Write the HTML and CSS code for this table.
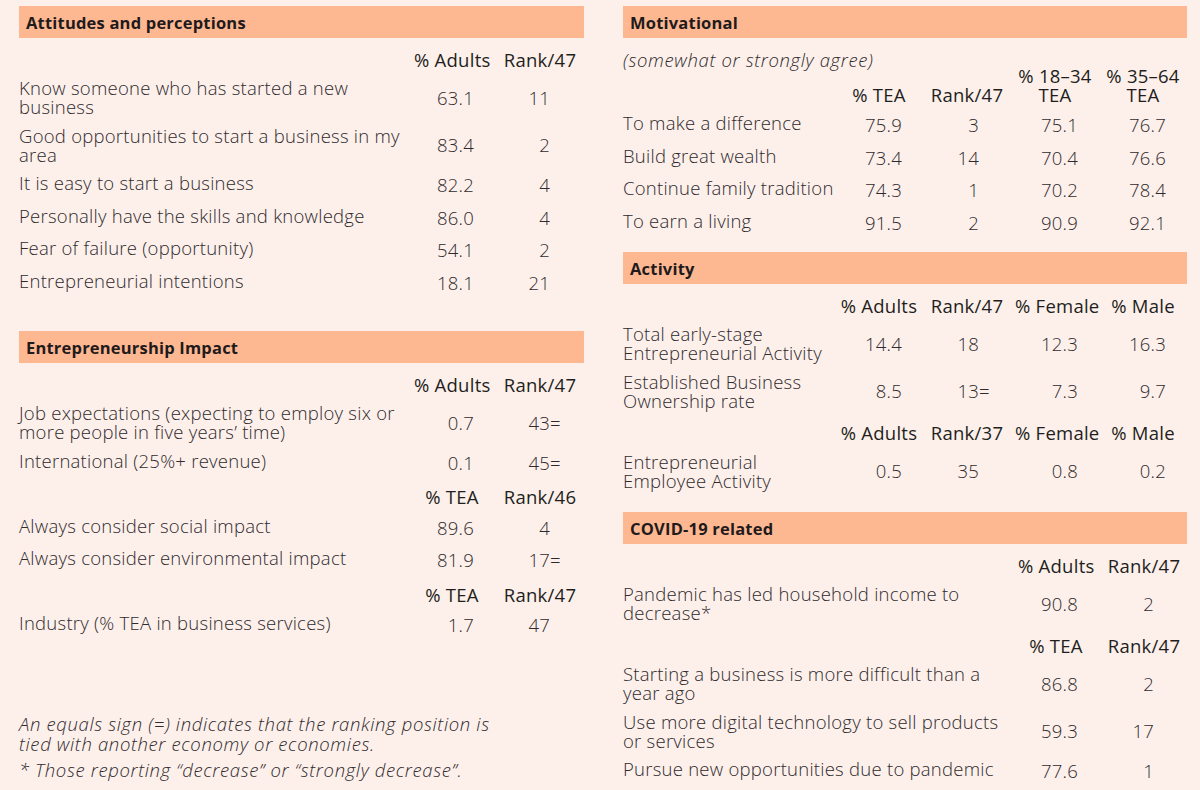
FILE: index.html
```html
<!DOCTYPE html>
<html lang="en">
<head>
<meta charset="utf-8">
<title>Entrepreneurship profile</title>
<link rel="stylesheet" href="styles.css">
</head>
<body>
<div class="page">
  <div class="col">
    <section class="sec">
      <h2 class="bar">Attitudes and perceptions</h2>
      <div class="tbl t2">
        <div></div><div class="hd">% Adults</div><div class="hd">Rank/47</div>
        <div class="lb">Know someone who has started a new business</div><div class="v a1">63.1</div><div class="v a2">11</div>
        <div class="lb">Good opportunities to start a business in my area</div><div class="v a1">83.4</div><div class="v a2">2</div>
        <div class="lb">It is easy to start a business</div><div class="v a1">82.2</div><div class="v a2">4</div>
        <div class="lb">Personally have the skills and knowledge</div><div class="v a1">86.0</div><div class="v a2">4</div>
        <div class="lb">Fear of failure (opportunity)</div><div class="v a1">54.1</div><div class="v a2">2</div>
        <div class="lb">Entrepreneurial intentions</div><div class="v a1">18.1</div><div class="v a2">21</div>
      </div>
    </section>

    <section class="sec sec-impact">
      <h2 class="bar">Entrepreneurship Impact</h2>
      <div class="tbl t2">
        <div></div><div class="hd">% Adults</div><div class="hd">Rank/47</div>
        <div class="lb">Job expectations (expecting to employ six or more people in five years’ time)</div><div class="v a1">0.7</div><div class="v a2">43<span class="eq">=</span></div>
        <div class="lb">International (25%+ revenue)</div><div class="v a1">0.1</div><div class="v a2">45<span class="eq">=</span></div>
        <div class="sub"></div><div class="hd sub">% TEA</div><div class="hd sub">Rank/46</div>
        <div class="lb">Always consider social impact</div><div class="v a1">89.6</div><div class="v a2">4</div>
        <div class="lb">Always consider environmental impact</div><div class="v a1">81.9</div><div class="v a2">17<span class="eq">=</span></div>
        <div class="sub"></div><div class="hd sub">% TEA</div><div class="hd sub">Rank/47</div>
        <div class="lb">Industry (% TEA in business services)</div><div class="v a1">1.7</div><div class="v a2">47</div>
      </div>
    </section>

    <div class="notes">
      <p>An equals sign (=) indicates that the ranking position is tied with another economy or economies.</p>
      <p>* Those reporting “decrease” or “strongly decrease”.</p>
    </div>
  </div>

  <div class="col">
    <section class="sec">
      <h2 class="bar">Motivational</h2>
      <div class="tbl t4">
        <div class="note">(somewhat or strongly agree)</div><div class="hd">% TEA</div><div class="hd">Rank/47</div><div class="hd two">% 18–34 TEA</div><div class="hd two">% 35–64 TEA</div>
        <div class="lb nw">To make a difference</div><div class="v b1">75.9</div><div class="v b2">3</div><div class="v b3">75.1</div><div class="v b4">76.7</div>
        <div class="lb nw">Build great wealth</div><div class="v b1">73.4</div><div class="v b2">14</div><div class="v b3">70.4</div><div class="v b4">76.6</div>
        <div class="lb nw">Continue family tradition</div><div class="v b1">74.3</div><div class="v b2">1</div><div class="v b3">70.2</div><div class="v b4">78.4</div>
        <div class="lb nw">To earn a living</div><div class="v b1">91.5</div><div class="v b2">2</div><div class="v b3">90.9</div><div class="v b4">92.1</div>
      </div>
    </section>

    <section class="sec sec-activity">
      <h2 class="bar">Activity</h2>
      <div class="tbl t4">
        <div></div><div class="hd">% Adults</div><div class="hd">Rank/47</div><div class="hd">% Female</div><div class="hd">% Male</div>
        <div class="lb">Total early-stage Entrepreneurial Activity</div><div class="v b1">14.4</div><div class="v b2">18</div><div class="v b3">12.3</div><div class="v b4">16.3</div>
        <div class="lb">Established Business Ownership rate</div><div class="v b1">8.5</div><div class="v b2">13<span class="eq">=</span></div><div class="v b3">7.3</div><div class="v b4">9.7</div>
        <div class="sub"></div><div class="hd sub">% Adults</div><div class="hd sub">Rank/37</div><div class="hd sub">% Female</div><div class="hd sub">% Male</div>
        <div class="lb">Entrepreneurial Employee Activity</div><div class="v b1">0.5</div><div class="v b2">35</div><div class="v b3">0.8</div><div class="v b4">0.2</div>
      </div>
    </section>

    <section class="sec sec-covid">
      <h2 class="bar">COVID-19 related</h2>
      <div class="tbl t2">
        <div></div><div class="hd">% Adults</div><div class="hd">Rank/47</div>
        <div class="lb">Pandemic has led household income to decrease*</div><div class="v a1">90.8</div><div class="v a2">2</div>
        <div class="sub"></div><div class="hd sub">% TEA</div><div class="hd sub">Rank/47</div>
        <div class="lb">Starting a business is more difficult than a year ago</div><div class="v a1">86.8</div><div class="v a2">2</div>
        <div class="lb">Use more digital technology to sell products or services</div><div class="v a1">59.3</div><div class="v a2">17</div>
        <div class="lb">Pursue new opportunities due to pandemic</div><div class="v a1">77.6</div><div class="v a2">1</div>
      </div>
    </section>
  </div>
</div>
</body>
</html>
```

FILE: styles.css
```css
* { box-sizing: border-box; }
html, body { margin: 0; padding: 0; }
body {
  width: 1200px;
  height: 790px;
  overflow: hidden;
  background: #fdf0eb;
  font-family: "Open Sans", "Liberation Sans", sans-serif;
  font-size: 18.5px;
  font-weight: 300;
  letter-spacing: 0.25px;
  color: #2f2a2d;
}
.page {
  display: grid;
  grid-template-columns: 565px 564px;
  column-gap: 39px;
  padding: 6px 0 0 19px;
}
.col { display: flex; flex-direction: column; min-width: 0; }
.sec-impact { margin-top: 37.5px; }
.sec-activity { margin-top: 18.5px; }
.sec-covid { margin-top: 22.5px; }

.bar {
  margin: 0 0 11.5px;
  height: 32px;
  padding: 2px 7px 0;
  line-height: 30px;
  background: #fdb891;
  color: #1f1a1b;
  font-size: 16.5px;
  font-weight: 700;
  letter-spacing: 0.2px;
}

.tbl {
  display: grid;
  row-gap: 9.5px;
  line-height: 19px;
}
.t2 { grid-template-columns: 385px 76px 80px; column-gap: 10px; }
.t4 {
  grid-template-columns: minmax(0, 1fr) 80px 80px 80px 80px;
  column-gap: 8px;
  padding-right: 4px;
}

.hd {
  text-align: center;
  color: #221e20;
  font-weight: 400;
  white-space: nowrap;
  align-self: end;
}
.hd.two { white-space: normal; }
.sub { margin-top: 4px; }
.note {
  align-self: start;
  min-height: 54px;
  font-style: italic;
  letter-spacing: 0.65px;
  white-space: nowrap;
}
.lb { min-height: 23px; }
.nw { white-space: nowrap; }
.v {
  align-self: center;
  text-align: right;
  white-space: nowrap;
}
.a1 { padding-right: 16px; }
.a2 { padding-right: 30px; }
.b1 { padding-right: 17px; }
.b2 { padding-right: 28px; }
.b3 { padding-right: 17px; }
.b4 { padding-right: 17px; }
.eq { display: inline-block; width: 0; }

.notes {
  margin-top: 78px;
  max-width: 485px;
  font-style: italic;
  letter-spacing: 0.65px;
  line-height: 20px;
}
.notes p { margin: 0 0 6px; }
```
